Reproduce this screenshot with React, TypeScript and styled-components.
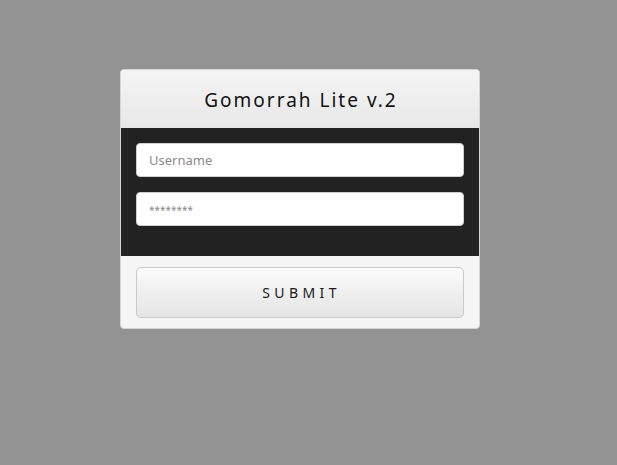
import React from "react";
import styled, { createGlobalStyle } from "styled-components";

const Global = createGlobalStyle`
  html, body {
    margin: 0;
    padding: 0;
    background: #939393;
    font-family: "Noto Sans", "Open Sans", sans-serif;
  }
`;

const Page = styled.div`
  width: 617px;
  height: 465px;
  padding: 69px 0 0 120px;
  box-sizing: border-box;
  display: flex;
`;

const Card = styled.form`
  width: 360px;
  height: 260px;
  box-sizing: border-box;
  border: 1px solid #d6d6d6;
  border-radius: 4px;
  overflow: hidden;
  background: #f5f5f5;
  display: flex;
  flex-direction: column;
`;

const Header = styled.div`
  height: 58px;
  display: flex;
  align-items: center;
  justify-content: center;
  background: linear-gradient(#f4f4f4, #e8e8e8);
`;

const Title = styled.h1`
  margin: 0;
  font-size: 19px;
  font-weight: 400;
  letter-spacing: 2px;
  color: #111;
  padding: 2px 0 0 2px;
`;

const Fields = styled.div`
  background: #222222;
  padding: 15px 15px 30px;
  display: flex;
  flex-direction: column;
  gap: 15px;
`;

const Input = styled.input<{ $hintSize?: number }>`
  height: 34px;
  box-sizing: border-box;
  border: 1px solid #cfcfcf;
  border-radius: 4px;
  background: #fff;
  padding: 0 12px;
  font-family: inherit;
  font-size: 13px;
  color: #333;
  outline: none;

  &::placeholder {
    color: #8a8a8a;
    font-size: ${(p) => p.$hintSize ?? 13}px;
  }
`;

const Footer = styled.div`
  padding: 11px 15px 10px;
`;

const Submit = styled.button`
  width: 100%;
  height: 51px;
  border: 1px solid #cacaca;
  border-radius: 5px;
  background: linear-gradient(#fbfbfb, #e4e4e4);
  font-family: inherit;
  font-size: 14px;
  letter-spacing: 4.4px;
  text-transform: uppercase;
  color: #1a1a1a;
  padding: 0 0 0 3px;
  cursor: pointer;
`;

export default function App() {
  return (
    <>
      <Global />
      <Page>
        <Card onSubmit={(e) => e.preventDefault()}>
          <Header>
            <Title>Gomorrah Lite v.2</Title>
          </Header>
          <Fields>
            <Input type="text" placeholder="Username" />
            <Input type="password" placeholder="********" $hintSize={10} />
          </Fields>
          <Footer>
            <Submit type="submit">Submit</Submit>
          </Footer>
        </Card>
      </Page>
    </>
  );
}
